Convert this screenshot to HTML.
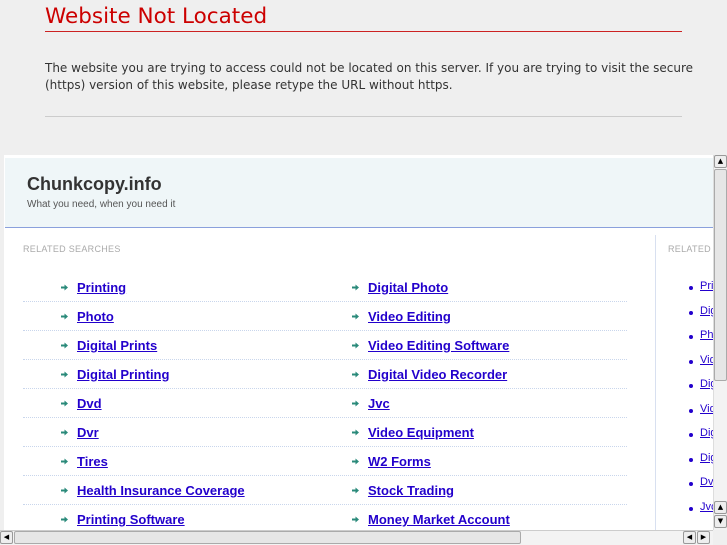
<!DOCTYPE html>
<html><head><meta charset="utf-8"><style>
*{margin:0;padding:0;box-sizing:border-box}
html,body{width:727px;height:545px;overflow:hidden;background:#efefef;font-family:"DejaVu Sans",sans-serif;position:relative}
.t{position:absolute;left:45px;top:4px;font-size:21.5px;color:#c00;white-space:nowrap}
.rl{position:absolute;left:45px;top:31px;width:637px;height:0;border-top:1px solid #cc2222}
.p{position:absolute;left:45px;top:60px;font-size:12px;line-height:16.5px;color:#333;width:650px}
.hr{position:absolute;left:45px;top:116px;width:637px;height:1px;background:#ccc}
.fr{position:absolute;left:4px;top:155px;width:709px;height:375px;background:#fff;overflow:hidden;font-family:"Liberation Sans",Arial,sans-serif}
.hd{position:absolute;left:1px;top:3px;width:708px;height:70px;background:#eff6f8;border-bottom:1px solid #8aa0dc}
.hd b{position:absolute;left:22px;top:16px;font-size:18px;color:#333}
.hd i{position:absolute;left:22px;top:41px;font-size:10px;font-style:normal;color:#555}
.lab{position:absolute;top:89px;font-size:9px;color:#aaa;letter-spacing:.3px;white-space:nowrap}
.row{position:absolute;left:19px;width:604px;height:29px;border-bottom:1px dotted #c9d6ec}
.a{position:absolute;font-size:13px;font-weight:bold;color:#2200cc;text-decoration:underline;white-space:nowrap}
.ar{position:absolute;width:7px;height:7px}
.vl{position:absolute;left:651px;top:80px;width:1px;height:300px;background:#d8e0f0}
.b{position:absolute;left:685px;width:4px;height:4px;border-radius:2px;background:#2200cc}
.s{position:absolute;left:696px;font-size:11px;color:#2200cc;text-decoration:underline;white-space:nowrap}
.vs{position:absolute;left:713px;top:155px;width:14px;height:375px;background:#f3f3f3;border-left:1px solid #ddd}
.hs{position:absolute;left:0;top:530px;width:713px;height:15px;background:#f3f3f3;border-top:1px solid #ccc}
.btn{position:absolute;width:13px;height:13px;background:#eee;border:1px solid #999;border-radius:2px;font-size:7px;line-height:11px;text-align:center;color:#000}
.th{position:absolute;background:#e6e6e6;border:1px solid #aaa;border-radius:2px}
</style></head><body>
<div class="t">Website Not Located</div><div class="rl"></div>
<div class="p">The website you are trying to access could not be located on this server. If you are trying to visit the secure (https) version of this website, please retype the URL without https.</div>
<div class="hr"></div>
<div class="fr">
<div class="hd"><b>Chunkcopy.info</b><i>What you need, when you need it</i></div>
<div class="lab" style="left:19px">RELATED SEARCHES</div>
<div class="vl"></div>
<div class="lab" style="left:664px">RELATED SEARCHES</div>
<div id="rows"></div>
</div>
<div class="vs"><div class="btn" style="left:0;top:0">▲</div><div class="th" style="left:0;top:14px;width:13px;height:212px"></div><div class="btn" style="left:0;top:346px">▲</div><div class="btn" style="left:0;top:360px">▼</div></div>
<div class="hs"><div class="btn" style="left:0;top:0">◀</div><div class="th" style="left:14px;top:0;width:507px;height:13px"></div><div class="btn" style="left:683px;top:0">◀</div><div class="btn" style="left:697px;top:0">▶</div></div>
<script>
var L=["Printing","Photo","Digital Prints","Digital Printing","Dvd","Dvr","Tires","Health Insurance Coverage","Printing Software"];
var R=["Digital Photo","Video Editing","Video Editing Software","Digital Video Recorder","Jvc","Video Equipment","W2 Forms","Stock Trading","Money Market Account"];
var S=["Printing","Digital Photo","Photo","Video Editing","Digital Prints","Video Editing Software","Digital Printing","Digital Video Recorder","Dvd","Jvc"];
var h="",arr='<svg class="ar" viewBox="0 0 7 7"><path d="M0 2.5h3.5V0.5L7 3.5 3.5 6.5V4.5H0z" fill="#2a8a7a"/></svg>';
for(var i=0;i<9;i++){var y=118+i*29;
h+='<div class="row" style="top:'+y+'px"></div>';
h+='<div style="position:absolute;left:57px;top:'+(y+11)+'px">'+arr+'</div><span class="a" style="left:73px;top:'+(y+7)+'px">'+L[i]+'</span>';
h+='<div style="position:absolute;left:348px;top:'+(y+11)+'px">'+arr+'</div><span class="a" style="left:364px;top:'+(y+7)+'px">'+R[i]+'</span>';}
for(var j=0;j<10;j++){var y=125+j*24.5;h+='<div class="b" style="top:'+(y+6)+'px"></div><span class="s" style="top:'+y+'px">'+S[j]+'</span>';}
document.getElementById("rows").innerHTML=h;
</script>
</body></html>
